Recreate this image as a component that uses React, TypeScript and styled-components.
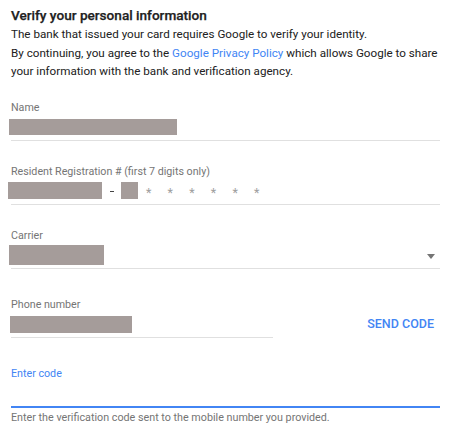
import React from 'react';
import styled, { createGlobalStyle } from 'styled-components';

const GlobalStyle = createGlobalStyle`
  body {
    margin: 0;
    background: #fff;
    font-family: Roboto, "Noto Sans", Arial, sans-serif;
    color: #212121;
  }
`;

const Page = styled.div`
  width: 429px;
  padding: 5px 13px 0 11px;
`;

const Title = styled.h1`
  margin: 0;
  font-size: 13.6px;
  font-weight: 500;
  -webkit-text-stroke: 0.25px #212121;
  line-height: 20px;
  color: #212121;
`;

const Intro = styled.p`
  margin: 0;
  font-size: 11.65px;
  line-height: 18.5px;
  color: #212121;
  white-space: nowrap;
`;

const Link = styled.a`
  color: #4285f4;
  text-decoration: none;
`;

interface FieldProps {
  readonly $top: number;
  readonly $width?: number;
}

const Field = styled.div<FieldProps>`
  margin-top: ${({ $top }) => $top}px;
  width: ${({ $width }) => ($width ? `${$width}px` : '100%')};
  display: flex;
  flex-direction: column;
`;

const Label = styled.label<{ readonly $active?: boolean }>`
  font-size: 10.7px;
  line-height: 14px;
  color: ${({ $active }) => ($active ? '#4285f4' : '#757575')};
`;

const InputRow = styled.div<{ readonly $active?: boolean }>`
  height: 25px;
  display: flex;
  align-items: flex-end;
  border-bottom: ${({ $active }) => ($active ? '2px solid #4285f4' : '1px solid #e0e0e0')};
`;

interface RedactionProps {
  readonly $w: number;
  readonly $h: number;
  readonly $shift?: number;
  readonly $lift?: number;
}

const Redaction = styled.span<RedactionProps>`
  display: block;
  flex: 0 0 auto;
  width: ${({ $w }) => $w}px;
  height: ${({ $h }) => $h}px;
  margin-left: ${({ $shift }) => $shift ?? 0}px;
  margin-bottom: ${({ $lift }) => $lift ?? 5}px;
  background: #a59c9a;
`;

const Dash = styled.span`
  display: block;
  width: 4px;
  height: 1px;
  margin: 0 7px 12px 8px;
  background: #444;
`;

const Masked = styled.span`
  display: flex;
  margin-left: 8px;
  margin-bottom: 4px;
`;

const Star = styled.span`
  width: 21.6px;
  font-size: 12.5px;
  line-height: 14px;
  color: #9e9e9e;
`;

const Caret = styled.span`
  margin-left: auto;
  margin-right: 5px;
  margin-bottom: 9px;
  width: 0;
  height: 0;
  border-left: 4px solid transparent;
  border-right: 4px solid transparent;
  border-top: 5px solid #757575;
`;

const PhoneLine = styled.div`
  display: flex;
  align-items: flex-end;
`;

const SendButton = styled.button`
  margin-left: auto;
  margin-right: 6px;
  margin-bottom: 7px;
  padding: 0;
  border: none;
  background: none;
  font-family: Roboto, Arial, sans-serif;
  font-size: 12.5px;
  font-weight: 500;
  line-height: 14px;
  color: #4285f4;
  cursor: pointer;
`;

const Helper = styled.div`
  margin-top: 3px;
  font-size: 10.75px;
  line-height: 14px;
  color: #757575;
`;

export default function App() {
  return (
    <Page>
      <GlobalStyle />
      <Title>Verify your personal information</Title>
      <Intro>
        The bank that issued your card requires Google to verify your identity.
        <br />
        By continuing, you agree to the <Link href="#">Google Privacy Policy</Link> which allows Google to share
        <br />
        your information with the bank and verification agency.
      </Intro>

      <Field $top={20}>
        <Label>Name</Label>
        <InputRow>
          <Redaction $w={168} $h={16} $shift={-2} />
        </InputRow>
      </Field>

      <Field $top={24}>
        <Label>Resident Registration # (first 7 digits only)</Label>
        <InputRow>
          <Redaction $w={94} $h={17} $shift={-3} />
          <Dash />
          <Redaction $w={17} $h={17} />
          <Masked>
            {Array.from({ length: 6 }).map((_, i) => (
              <Star key={i}>*</Star>
            ))}
          </Masked>
        </InputRow>
      </Field>

      <Field $top={24}>
        <Label>Carrier</Label>
        <InputRow>
          <Redaction $w={95} $h={20} $shift={-2} $lift={3} />
          <Caret />
        </InputRow>
      </Field>

      <PhoneLine>
        <Field $top={29} $width={262}>
          <Label>Phone number</Label>
          <InputRow>
            <Redaction $w={122} $h={17} $shift={-1} $lift={4} />
          </InputRow>
        </Field>
        <SendButton>SEND CODE</SendButton>
      </PhoneLine>

      <Field $top={29}>
        <Label $active>Enter code</Label>
        <InputRow $active />
        <Helper>Enter the verification code sent to the mobile number you provided.</Helper>
      </Field>
    </Page>
  );
}
